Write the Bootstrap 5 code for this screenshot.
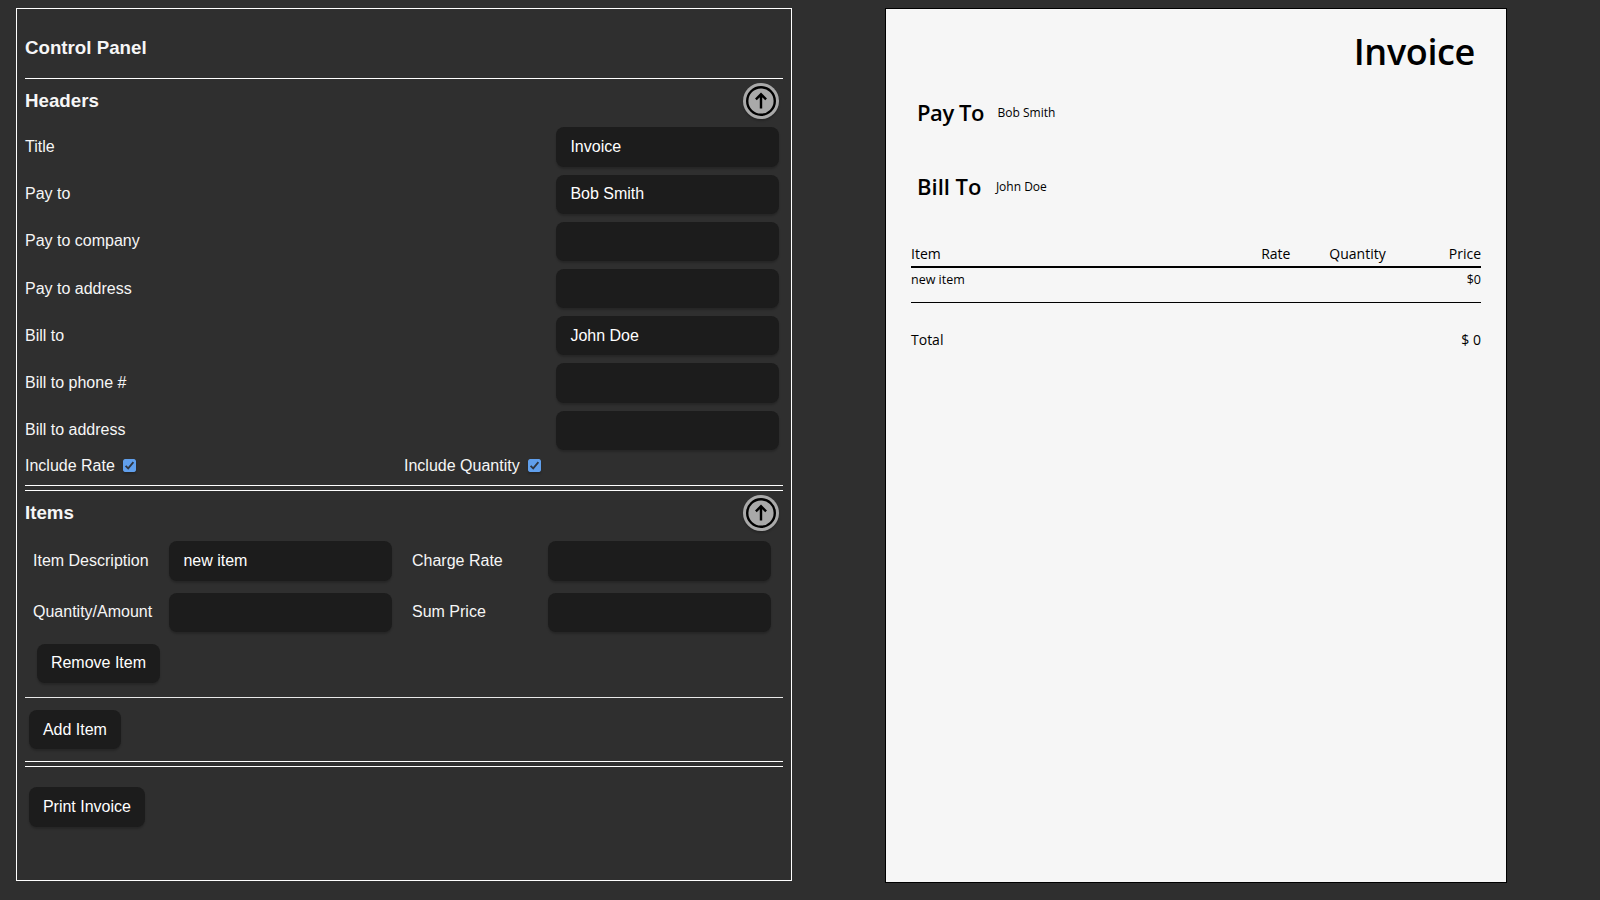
<!DOCTYPE html>
<html lang="en">
<head>
<meta charset="utf-8">
<title>Invoice Generator</title>
<link href="https://cdn.jsdelivr.net/npm/bootstrap@5.3.0/dist/css/bootstrap.min.css" rel="stylesheet">
<style>
body{height:900px;overflow:hidden;background:#2f2f2f;color:#f6f6f6;font:16px/18.4px "Liberation Sans",Arial,sans-serif}
.panel{width:776px;height:873px;margin:8px 0 0 16px;padding:0 8px;border:1px solid #fff;flex:none}
.panel h1,.panel h2{font-size:18.72px;line-height:22px;font-weight:700;margin:0}
.title-row{height:69px;padding-top:28px}
.rule{height:1px;background:#fff}
.rule-soft{background:#e8e8e8}
.section-head{height:44.4px;padding:4px 4px 0 0}
.section-head h2{padding-top:7px}
.field,.act{height:39.2px;border:0;border-radius:8px;background:#1c1c1c;color:#fff;box-shadow:0 2px 2px rgba(0,0,0,.2);font:inherit;outline:0}
.field{width:223px;padding:0 14.4px}
.act{padding:0 13.9px}
.row-line{height:47.2px;padding:4px 4px 4px 0}
.row-line label{padding-top:10.6px}
.arrow-btn{width:36px;height:36px;border:0;padding:0;border-radius:50%;background:#a9a9a9;box-shadow:0 2px 2px rgba(0,0,0,.2)}
.arrow-btn svg{display:block}
.checks{height:31.4px;padding-top:2.8px}
.tick{width:13px;height:13px;display:block;margin:2.4px 0 0 8px;border-radius:2px;box-shadow:0 2px 2px rgba(0,0,0,.2)}
.item-row{height:51.2px;padding-top:6px}
.item-cell{width:379px;padding-left:8px}
.item-cell label{width:136px;padding-top:10.5px}
.remove-row{height:59.2px;padding:6px 0 0 12px}
.remove-row .act{padding-bottom:1.4px}
.add-row{height:63px;padding:12px 0 0 4px}
.add-row .act{padding-top:1.2px}
.print-row{padding:20.4px 0 0 4px}
.paper{width:622px;height:875px;margin:8px 0 0 93px;padding:22px 25px 0;border:1px solid #000;background:#f6f6f6;color:#000;font:14px/19px "Open Sans",sans-serif;flex:none}
.inv-title{height:67px;padding:1px 6px 0 0;font-size:36px;line-height:40px;font-weight:600;letter-spacing:-.35px;margin:0}
.party{height:73px;padding-left:6px}
.party+.party{margin-top:1px;height:72px}
.party h3{font-size:22px;line-height:28px;font-weight:600;margin:0}
.party:not(.party+.party) h3{letter-spacing:-.45px}
.party span{font-size:12px;line-height:20px;padding:5px 0 0 13.6px}
.party+.party span{padding-left:14.4px}
.inv-head{height:24px;border-bottom:2px solid #000}
.inv-cell{width:95.3px;text-align:right}
.inv-item{height:35px;padding-top:3px;border-bottom:1px solid #000;font-size:12.5px;line-height:18px}
.inv-total{padding-top:27px}
</style>
</head>
<body class="d-flex align-items-start">
<svg width="0" height="0" class="position-absolute">
  <symbol id="up" viewBox="0 0 36 36"><g fill="none" stroke="#000" stroke-width="2.4"><circle cx="18" cy="18" r="13.8"/><path d="M18 25.6V11.6M12.9 16.4L18 11.3l5.1 5.1"/></g></symbol>
  <symbol id="check" viewBox="0 0 13 13"><rect width="13" height="13" rx="1.5" fill="#609fec"/><path d="M2.6 6.8l2.6 2.6 5.2-6.2" fill="none" stroke="#2f3640" stroke-width="1.8"/></symbol>
</svg>
<section class="panel">
  <div class="title-row"><h1>Control Panel</h1></div>
  <div class="rule"></div>
  <div class="section-head d-flex justify-content-between"><h2>Headers</h2><button class="arrow-btn" aria-label="Collapse headers"><svg width="36" height="36"><use href="#up"/></svg></button></div>
  <div class="row-line d-flex justify-content-between"><label>Title</label><input class="field" value="Invoice"></div>
  <div class="row-line d-flex justify-content-between"><label>Pay to</label><input class="field" value="Bob Smith"></div>
  <div class="row-line d-flex justify-content-between"><label>Pay to company</label><input class="field"></div>
  <div class="row-line d-flex justify-content-between"><label>Pay to address</label><input class="field"></div>
  <div class="row-line d-flex justify-content-between"><label>Bill to</label><input class="field" value="John Doe"></div>
  <div class="row-line d-flex justify-content-between"><label>Bill to phone #</label><input class="field"></div>
  <div class="row-line d-flex justify-content-between"><label>Bill to address</label><input class="field"></div>
  <div class="checks d-flex">
    <div class="w-50 d-flex align-items-start">Include Rate<svg class="tick"><use href="#check"/></svg></div>
    <div class="w-50 d-flex align-items-start">Include Quantity<svg class="tick"><use href="#check"/></svg></div>
  </div>
  <div class="rule mb-1"></div>
  <div class="rule"></div>
  <div class="section-head d-flex justify-content-between"><h2>Items</h2><button class="arrow-btn" aria-label="Collapse items"><svg width="36" height="36"><use href="#up"/></svg></button></div>
  <div class="item-row d-flex">
    <div class="item-cell d-flex"><label>Item Description</label><input class="field" value="new item"></div>
    <div class="item-cell d-flex"><label>Charge Rate</label><input class="field"></div>
  </div>
  <div class="item-row d-flex">
    <div class="item-cell d-flex"><label>Quantity/Amount</label><input class="field"></div>
    <div class="item-cell d-flex"><label>Sum Price</label><input class="field"></div>
  </div>
  <div class="remove-row d-flex align-items-start"><button class="act">Remove Item</button></div>
  <div class="rule rule-soft"></div>
  <div class="add-row d-flex align-items-start"><button class="act">Add Item</button></div>
  <div class="rule mb-1"></div>
  <div class="rule"></div>
  <div class="print-row d-flex align-items-start"><button class="act">Print Invoice</button></div>
</section>
<main class="paper">
  <h1 class="inv-title text-end">Invoice</h1>
  <div class="party d-flex align-items-start"><h3>Pay To</h3><span>Bob Smith</span></div>
  <div class="party d-flex align-items-start"><h3>Bill To</h3><span>John Doe</span></div>
  <div class="inv-head d-flex"><div class="flex-fill">Item</div><div class="inv-cell">Rate</div><div class="inv-cell">Quantity</div><div class="inv-cell">Price</div></div>
  <div class="inv-item d-flex justify-content-between"><span>new item</span><span>$0</span></div>
  <div class="inv-total d-flex justify-content-between"><span>Total</span><span>$ 0</span></div>
</main>
<script src="https://cdn.jsdelivr.net/npm/bootstrap@5.3.0/dist/js/bootstrap.bundle.min.js"></script>
</body>
</html>
